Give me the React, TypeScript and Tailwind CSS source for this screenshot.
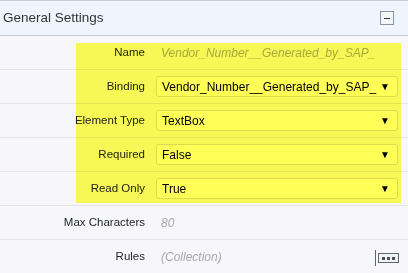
import React from "react";

const rows = [
  { label: "Name", kind: "text", value: "Vendor_Number__Generated_by_SAP_" },
  { label: "Binding", kind: "select", value: "Vendor_Number__Generated_by_SAP_" },
  { label: "Element Type", kind: "select", value: "TextBox" },
  { label: "Required", kind: "select", value: "False" },
  { label: "Read Only", kind: "select", value: "True" },
  { label: "Max Characters", kind: "text", value: "80" },
  { label: "Rules", kind: "collection", value: "(Collection)" },
];

function Row({ label, kind, value }: { label: string; kind: string; value: string }) {
  return (
    <div className="flex items-center h-[34px] border-b border-[#e4e5e8]">
      <div className="w-[145px] shrink-0 text-right text-[11.5px] text-[#22262a] pt-[1px]">{label}</div>
      <div className="flex-1 ml-[11px] mr-[10px] flex items-center">
        {kind === "select" ? (
          <div className="flex-1 h-[21px] flex items-center justify-between bg-white border border-[#dcdcdc] rounded-[3px] pl-[5px] pr-[7px] text-[12px] text-black">
            <span>{value}</span>
            <span className="text-[10px] leading-none">▼</span>
          </div>
        ) : (
          <div className="flex-1 flex items-center justify-between pl-[5px] text-[12px] italic text-[#a9a9a9]">
            <span>{value}</span>
            {kind === "collection" && (
              <div className="flex items-center gap-[2px] -mr-[1px] mt-[3px]">
                <div className="w-[1px] h-[16px] bg-[#5d6770]" />
                <div className="w-[21px] h-[10px] border border-[#5d6770] bg-[#f2f3f4] flex items-center justify-center gap-[2px]">
                  <span className="w-[3px] h-[3px] bg-[#4b545c]" />
                  <span className="w-[3px] h-[3px] bg-[#4b545c]" />
                  <span className="w-[3px] h-[3px] bg-[#4b545c]" />
                </div>
              </div>
            )}
          </div>
        )}
      </div>
    </div>
  );
}

export default function App() {
  return (
    <div className="relative w-[408px] h-[273px] overflow-hidden bg-[#f7f7f9] font-['Liberation_Sans',Arial,sans-serif]">
      {/* HEADER */}
      <div className="h-[36px] flex items-center justify-between border-t border-b border-[#c9cdd2] bg-[#eef5fc] pl-[3px] pr-[13px]">
        <span className="text-[13.5px] text-[#32363a]">General Settings</span>
        <div className="flex flex-col items-center mt-[2px]">
          <div className="w-[14px] h-[14px] border border-[#8c959e] bg-[#f4f6f8] flex items-center justify-center">
            <span className="w-[6px] h-[1px] bg-[#32363a]" />
          </div>
          <div className="w-[17px] h-[1px] bg-white mt-[1px]" />
        </div>
      </div>

      {/* ROWS */}
      <div className="flex flex-col">
        {rows.map((r) => (
          <Row key={r.label} {...r} />
        ))}
      </div>

      {/* HIGHLIGHT */}
      <div className="absolute left-[76px] top-[43px] w-[325px] h-[160px] bg-[#ffff58] mix-blend-multiply pointer-events-none" />
    </div>
  );
}
